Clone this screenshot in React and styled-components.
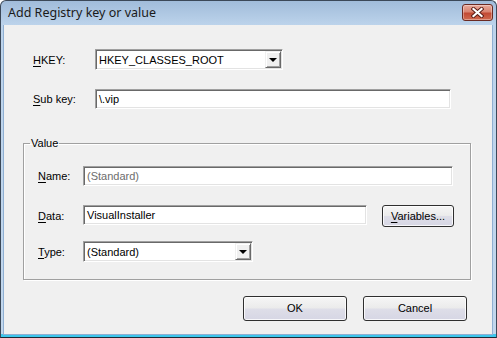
import React from "react";
import styled, { createGlobalStyle } from "styled-components";

const Global = createGlobalStyle`
  html, body {
    margin: 0;
    padding: 0;
    background: #ffffff;
  }
  * {
    box-sizing: border-box;
  }
`;

// Window chrome
const Window = styled.div`
  width: 497px;
  height: 338px;
  border: 1px solid #3b4858;
  border-bottom-color: #1c2a36;
  border-radius: 6px 6px 0 0;
  background: linear-gradient(
    to bottom,
    #a1bcda 0,
    #bcd3eb 24px,
    #c2d7ed calc(100% - 3px),
    #3cc6ec calc(100% - 3px)
  );
  padding: 0 3px 2px 2px;
  display: flex;
  flex-direction: column;
  overflow: hidden;
`;

const TitleBar = styled.div`
  height: 24px;
  display: flex;
  align-items: center;
  padding-left: 5px;
`;

const Title = styled.span`
  font-family: "Noto Sans", "Open Sans", sans-serif;
  font-size: 12.5px;
  color: #1a1a1a;
  margin-top: -1px;
`;

const CloseButton = styled.div`
  margin: 3px 0 0 auto;
  align-self: flex-start;
  width: 31px;
  height: 17px;
  border: 1px solid #6b2a22;
  border-radius: 3px;
  background: linear-gradient(to bottom, #e9aa9b 0, #d98471 45%, #c24a34 55%, #d06a4f 100%);
  box-shadow: inset 0 0 0 1px rgba(255, 255, 255, 0.35);
  display: flex;
  align-items: center;
  justify-content: center;
`;

const Client = styled.div`
  flex: 1;
  background: #f0f0f0;
  border: 1px solid #8fafd2;
  border-top: none;
  display: flex;
  flex-direction: column;
  padding: 24px 21px 0 19px;
  font-family: "Liberation Sans", Arial, sans-serif;
  font-size: 11px;
  color: #000;
`;

// Form rows
const Row = styled.div`
  display: flex;
  align-items: ${(p) => (p.$top ? "flex-start" : "center")};
  margin-top: ${(p) => p.$mt || 0}px;
  margin-left: ${(p) => p.$ml || 0}px;
`;

const Label = styled.span`
  width: ${(p) => p.$w}px;
  flex: none;
  line-height: 20px;
  ${(p) => p.$top && "margin-top: 1px;"}
`;

const Key = styled.u`
  text-decoration-thickness: 1px;
  text-underline-offset: 2px;
`;

const TextBox = styled.div`
  width: ${(p) => p.$w}px;
  height: 20px;
  flex: none;
  background: #fff;
  border: 1px solid;
  border-color: #a0a0a0 #ffffff #ffffff #a0a0a0;
  box-shadow: inset 1px 1px 0 #696969, inset -1px -1px 0 #e3e3e3;
  padding: 0 3px 0 3px;
  display: flex;
  align-items: center;
  color: ${(p) => (p.$disabled ? "#6d6d6d" : "#000")};
  white-space: nowrap;
`;

const Combo = styled(TextBox)`
  height: 21px;
  padding-right: 1px;
`;

const ComboText = styled.span`
  flex: 1;
`;

const DropButton = styled.div`
  width: 16px;
  height: 17px;
  background: #f0f0f0;
  border: 1px solid;
  border-color: #f0f0f0 #696969 #696969 #f0f0f0;
  box-shadow: inset 1px 1px 0 #fff, inset -1px -1px 0 #a0a0a0;
  display: flex;
  align-items: center;
  justify-content: center;
`;

const Arrow = styled.div`
  width: 0;
  height: 0;
  border-left: 4px solid transparent;
  border-right: 4px solid transparent;
  border-top: 4px solid #000;
  margin-top: 1px;
`;

// Group box
const Group = styled.fieldset`
  margin: 27px 0 0 0;
  padding: 0 14px 17px 14px;
  border: 1px solid #a0a0a0;
  box-shadow: inset 1px 1px 0 #fff, 1px 1px 0 #fff;
  min-width: 0;
`;

const Legend = styled.legend`
  margin-left: -8px;
  padding: 0 1px;
  line-height: 14px;
  font-size: 11px;
`;

// Push buttons
const Button = styled.div`
  width: ${(p) => p.$w}px;
  height: ${(p) => p.$h}px;
  flex: none;
  border: 1px solid #2f2f2f;
  border-radius: 3px;
  background: linear-gradient(to bottom, #f6f6f6 0, #ebebeb 48%, #dedee8 52%, #d6d6e4 100%);
  box-shadow: inset 0 0 0 1px rgba(255, 255, 255, 0.8);
  display: flex;
  align-items: center;
  justify-content: center;
  line-height: 1;
`;

const ButtonRow = styled.div`
  display: flex;
  justify-content: flex-end;
  gap: 16px;
  margin-top: 16px;
  padding-right: 4px;
`;

const Gap = styled.div`
  width: ${(p) => p.$w}px;
  flex: none;
`;

const CloseGlyph = () => (
  <svg width="13" height="11" viewBox="0 0 13 11">
    <path d="M2.5 2 L10.5 9 M10.5 2 L2.5 9" stroke="#5a1d16" strokeWidth="4" strokeLinecap="square" />
    <path d="M2.5 2 L10.5 9 M10.5 2 L2.5 9" stroke="#ffffff" strokeWidth="2.2" strokeLinecap="square" />
  </svg>
);

export default function App() {
  return (
    <>
      <Global />
      <Window>
        <TitleBar>
          <Title>Add Registry key or value</Title>
          <CloseButton>
            <CloseGlyph />
          </CloseButton>
        </TitleBar>
        <Client>
          <Row $ml={10}>
            <Label $w={62}>
              <Key>H</Key>KEY:
            </Label>
            <Combo $w={188}>
              <ComboText>HKEY_CLASSES_ROOT</ComboText>
              <DropButton>
                <Arrow />
              </DropButton>
            </Combo>
          </Row>
          <Row $ml={10} $mt={19}>
            <Label $w={62}>
              <Key>S</Key>ub key:
            </Label>
            <TextBox $w={356}>\.vip</TextBox>
          </Row>

          <Group>
            <Legend>Value</Legend>
            <Row $mt={16}>
              <Label $w={45}>
                <Key>N</Key>ame:
              </Label>
              <TextBox $w={370} $disabled>
                (Standard)
              </TextBox>
            </Row>
            <Row $mt={19} $top>
              <Label $w={45} $top>
                <Key>D</Key>ata:
              </Label>
              <TextBox $w={284}>VisualInstaller</TextBox>
              <Gap $w={15} />
              <Button $w={72} $h={22}>
                <span>
                  <Key>V</Key>ariables...
                </span>
              </Button>
            </Row>
            <Row $mt={14}>
              <Label $w={45}>
                <Key>T</Key>ype:
              </Label>
              <Combo $w={170}>
                <ComboText>(Standard)</ComboText>
                <DropButton>
                  <Arrow />
                </DropButton>
              </Combo>
            </Row>
          </Group>

          <ButtonRow>
            <Button $w={104} $h={25}>OK</Button>
            <Button $w={104} $h={25}>Cancel</Button>
          </ButtonRow>
        </Client>
      </Window>
    </>
  );
}
